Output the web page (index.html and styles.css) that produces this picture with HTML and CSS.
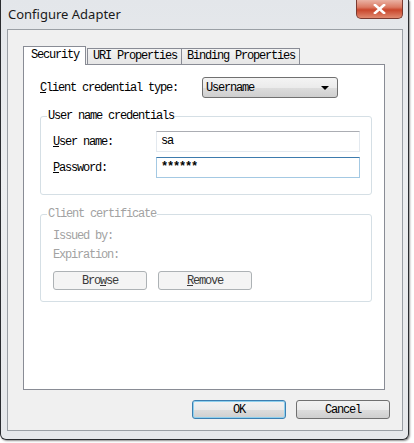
FILE: index.html
```html
<!DOCTYPE html>
<html lang="en">
<head>
  <meta charset="utf-8">
  <title>Configure Adapter</title>
  <link rel="stylesheet" href="styles.css">
</head>
<body>
  <div class="window">
    <div class="titlebar">
      <span class="title">Configure Adapter</span>
      <div class="close-btn">
        <svg width="13" height="10" viewBox="0 0 13 10">
          <path d="M2 1 L11 9 M11 1 L2 9" stroke="#fff" stroke-width="2.6" stroke-linecap="square" fill="none"/>
        </svg>
      </div>
    </div>

    <div class="client">
      <div class="tabs">
        <div class="tab active">Security</div>
        <div class="tab">URI Properties</div>
        <div class="tab">Binding Properties</div>
      </div>

      <div class="tab-panel">
        <div class="row first">
          <label class="label-wide"><u>C</u>lient credential type:</label>
          <div class="combo">
            <span>Username</span>
            <span class="arrow"></span>
          </div>
        </div>

        <fieldset class="group">
          <legend>User name credentials</legend>
          <div class="field">
            <label><u>U</u>ser name:</label>
            <div class="textbox">sa</div>
          </div>
          <div class="field">
            <label><u>P</u>assword:</label>
            <div class="textbox focused">******</div>
          </div>
        </fieldset>

        <fieldset class="group disabled">
          <legend>Client certificate</legend>
          <div class="info">Issued by:</div>
          <div class="info">Expiration:</div>
          <div class="btn-row">
            <button class="btn">Bro<u>w</u>se</button>
            <button class="btn"><u>R</u>emove</button>
          </div>
        </fieldset>
      </div>

      <div class="footer">
        <button class="btn default">OK</button>
        <button class="btn">Cancel</button>
      </div>
    </div>
  </div>
</body>
</html>
```

FILE: styles.css
```css
* {
  box-sizing: border-box;
  margin: 0;
  padding: 0;
}
body {
  background: #ffffff;
  width: 414px;
  height: 443px;
  overflow: hidden;
}
.window {
  width: 409px;
  height: 440px;
  display: flex;
  flex-direction: column;
  padding: 0 5px 8px 6px;
  background: linear-gradient(180deg, #e3e6ea 0%, #eceef0 40%, #e6e8eb 100%);
  border: 1px solid #2a2c30;
  border-top: none;
  border-radius: 0 0 6px 6px;
  box-shadow: 1px 1px 2px rgba(0, 0, 0, 0.45);
}
.titlebar {
  height: 29px;
  display: flex;
  align-items: flex-start;
  justify-content: space-between;
  flex-shrink: 0;
}
.title {
  font-family: "Noto Sans", "Open Sans", sans-serif;
  font-size: 13px;
  color: #1a1a1a;
  padding: 5px 0 0 1px;
}
.close-btn {
  width: 47px;
  height: 19px;
  display: flex;
  align-items: center;
  justify-content: center;
  border: 1px solid #7a3a30;
  border-top: none;
  border-radius: 0 0 5px 5px;
  background: linear-gradient(180deg, #eab2a4 0%, #db7a63 40%, #c9462c 55%, #e08a70 100%);
}
.client {
  flex: 1;
  display: flex;
  flex-direction: column;
  background: #f0f0f0;
  border: 1px solid #9a9fa5;
  padding: 16px 12px 11px 15px;
  font-family: "Courier New", "Liberation Mono", Courier, monospace;
  font-size: 12px;
  letter-spacing: -1.2px;
  color: #000;
}
.tabs {
  display: flex;
  align-items: flex-end;
  height: 18px;
  position: relative;
  z-index: 1;
}
.tab {
  height: 16px;
  padding: 0 3px 0 5px;
  line-height: 15px;
  border: 1px solid #898c95;
  border-bottom: none;
  margin-right: -1px;
  background: linear-gradient(180deg, #f3f3f3 0%, #e6e6e6 100%);
  white-space: nowrap;
}
.tab.active {
  height: 19px;
  margin-bottom: -1px;
  background: #ffffff;
  padding: 0 6px 0 7px;
  line-height: 16px;
  margin-right: 1px;
}
.tab:nth-child(2) {
  width: 95px;
}
.tab:nth-child(3) {
  width: 119px;
}
.tab-panel {
  flex: 1;
  width: 362px;
  background: #ffffff;
  border: 1px solid #898c95;
  padding: 12px 13px 0 16px;
  display: flex;
  flex-direction: column;
}
.row {
  display: flex;
  align-items: center;
  height: 21px;
}
.label-wide {
  width: 162px;
}
.combo {
  width: 136px;
  height: 21px;
  display: flex;
  align-items: center;
  justify-content: space-between;
  padding: 0 8px 0 3px;
  border: 1px solid #707070;
  border-radius: 3px;
  background: linear-gradient(180deg, #f4f4f4 0%, #ebebeb 50%, #dddddd 51%, #cfcfcf 100%);
}
.arrow {
  width: 0;
  height: 0;
  border-left: 4px solid transparent;
  border-right: 4px solid transparent;
  border-top: 4px solid #000;
}
.group {
  border: 1px solid #d5dfe5;
  border-radius: 3px;
  padding: 8px 11px 16px 6px;
  margin-top: 11px;
  width: 332px;
}
.group legend {
  padding: 0 1px;
  line-height: 14px;
}
.field {
  display: flex;
  align-items: center;
  height: 21px;
  padding-left: 6px;
}
.field + .field {
  margin-top: 5px;
}
.field label {
  width: 103px;
}
.textbox {
  width: 204px;
  height: 21px;
  padding: 0 4px;
  line-height: 19px;
  border: 1px solid #e3e9ef;
  border-top-color: #abadb3;
}
.textbox.focused {
  border-color: #a4c9e3;
  border-top-color: #3d7bad;
  font-weight: bold;
}
.group.disabled {
  margin-top: 12px;
  padding: 6px 11px 11px 6px;
}
.group.disabled legend,
.info {
  color: #a2a2a2;
}
.info {
  height: 19px;
  line-height: 19px;
  padding-left: 6px;
}
.btn-row {
  display: flex;
  gap: 11px;
  padding-left: 6px;
  margin-top: 6px;
}
.btn {
  width: 94px;
  height: 19px;
  font-family: "Courier New", "Liberation Mono", Courier, monospace;
  font-size: 12px;
  letter-spacing: -1.2px;
  color: #000;
  border: 1px solid #707070;
  border-radius: 3px;
  background: linear-gradient(180deg, #f2f2f2 0%, #ebebeb 50%, #dddddd 51%, #cfcfcf 100%);
}
.btn-row .btn {
  color: #3a3a3a;
  border-color: #adb2b5;
  background: #f4f4f4;
}
.btn.default {
  border-color: #3c7fb1;
  box-shadow: inset 0 0 0 1px #8ed0ee;
}
.footer {
  display: flex;
  justify-content: flex-end;
  gap: 10px;
  padding-top: 10px;
}
```
